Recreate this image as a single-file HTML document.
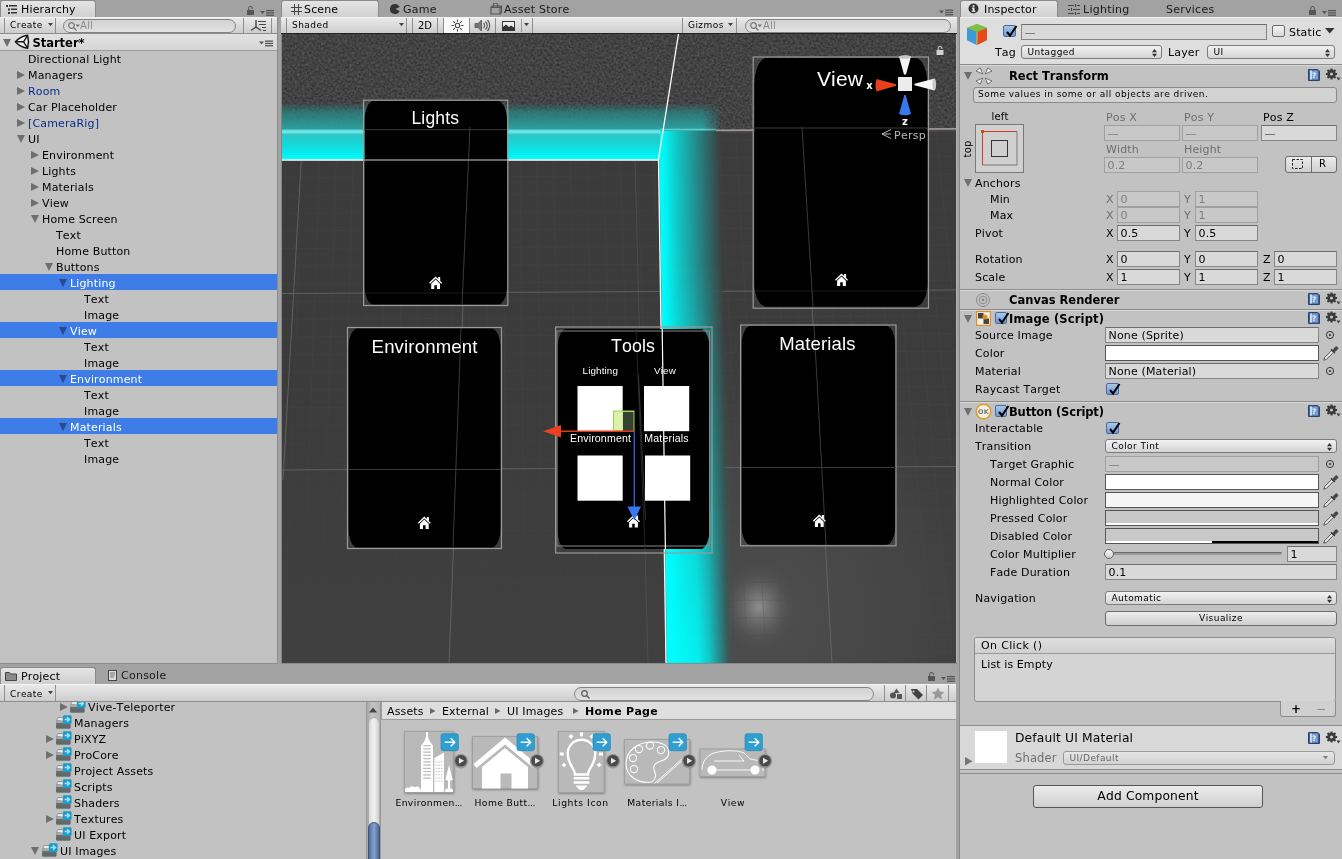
<!DOCTYPE html><html><head><meta charset="utf-8"><title>Unity</title><style>
*{box-sizing:border-box}
html,body{margin:0;padding:0}
body{width:1342px;height:859px;background:#a2a2a2;position:relative;overflow:hidden;
 font-family:"DejaVu Sans","Liberation Sans",sans-serif;font-size:11px;color:#000;letter-spacing:.15px;line-height:16px;font-kerning:none;font-variant-ligatures:none}
#root{position:absolute;left:0;top:0;width:1342px;height:859px;overflow:hidden;will-change:transform}
.a{position:absolute}
.panel{position:absolute;background:#c2c2c2}
.tab{position:absolute;top:0px;height:18px;padding-top:1px;background:linear-gradient(#e4e4e4,#cfcfcf);border:1px solid #8a8a8a;border-bottom:none;border-radius:3px 3px 0 0;font-size:11px;letter-spacing:.15px;line-height:16px;white-space:nowrap}
.itab{position:absolute;top:1px;height:16px;font-size:11px;letter-spacing:.25px;line-height:17px;color:#1a1a1a;white-space:nowrap}
.tb{position:absolute;height:17px;background:linear-gradient(#e9e9e9,#cdcdcd);border-top:1px solid #f4f4f4;border-bottom:1px solid #8c8c8c}
.tbtn{position:absolute;top:0;height:15px;border-left:1px solid #8f8f8f;border-right:1px solid #8f8f8f;font-size:9px;letter-spacing:.45px;line-height:15px;white-space:nowrap;padding-left:5px}
.tb.p .tbtn{height:16px;line-height:18px}
.tb.p .tbtn svg{margin-top:1px}
.tb.p .search{margin-top:1px}
.search{position:absolute;height:14px;border:1px solid #848484;border-radius:7px;background:linear-gradient(#d2d2d2,#e2e2e2);font-size:10px;line-height:12px;color:#8a8a8a;white-space:nowrap}
.row{position:absolute;left:0;height:16px;white-space:nowrap;line-height:16px}
.sel{background:#3e7de7;color:#fff}
.t{position:absolute;white-space:nowrap}
.tri-r{position:absolute;width:0;height:0;border-left:8px solid #6f6f6f;border-top:4.5px solid transparent;border-bottom:4.5px solid transparent}
.tri-d{position:absolute;width:0;height:0;border-top:8px solid #6f6f6f;border-left:4.5px solid transparent;border-right:4.5px solid transparent}
.sel .tri-d{border-top-color:#2a4a8a}
.fld{position:absolute;height:16px;border:1px solid #868686;border-top-color:#6e6e6e;background:#d9d9d9;font-size:11px;line-height:15px;padding-left:2.5px;white-space:nowrap;overflow:hidden}
.fld.dis{border-color:#a0a0a0;background:#c8c8c8;color:#7d7d7d}
.pop{position:absolute;height:14px;border:1px solid #7c7c7c;border-radius:3px;background:linear-gradient(#f2f2f2,#d4d4d4);font-size:9px;letter-spacing:.42px;line-height:12.5px;padding-left:5.5px;white-space:nowrap}
.btn{position:absolute;border:1px solid #6c6c6c;border-radius:3px;background:linear-gradient(#ececec,#cfcfcf);text-align:center;white-space:nowrap}
.hdr{position:absolute;left:960px;width:382px;border-top:1px solid #8e8e8e}
.b{font-weight:bold;letter-spacing:0}
.lbl{position:absolute;white-space:nowrap;line-height:16px}
.gray{color:#6e6e6e}
.cb{position:absolute;width:12.5px;height:12px;border:1px solid #6b6b6b;border-radius:2px;background:linear-gradient(#f4f4f4,#d8d8d8)}
.cb svg{position:absolute;left:0;top:-2px}
</style></head><body><div id="root">
<div class="panel" style="left:0;top:17px;width:278px;height:646.5px;border-right:1px solid #8c8c8c;border-bottom:1px solid #8c8c8c"></div>
<div class="tab" style="left:0;width:96px;padding-left:20px">Hierarchy</div>
<svg class="a" style="left:5px;top:4px" width="13" height="10"><g fill="#333"><rect x="1" y="1" width="2" height="2"/><rect x="4" y="1" width="8" height="1.5"/><rect x="3" y="4.5" width="2" height="2"/><rect x="6" y="4.5" width="6" height="1.5"/><rect x="3" y="8" width="2" height="2"/><rect x="6" y="8" width="6" height="1.5"/></g></svg>
<svg class="a" style="left:247px;top:4.5px" width="30" height="12"><g fill="#555"><rect x="0" y="5" width="7" height="5"/><path d="M1.2 5V3.2a2.3 2.3 0 0 1 4.6 0V4H4.8V3.2a1.3 1.3 0 0 0-2.6 0V5z"/><path d="M13 6h5l-2.5 3z"/><rect x="19" y="5" width="8" height="1.3"/><rect x="19" y="7.3" width="8" height="1.3"/><rect x="19" y="9.6" width="8" height="1.3"/></g></svg>
<div class="tb" style="left:0;top:17px;width:277px">
<div class="tbtn" style="left:4px;width:52px">Create<svg class="a" style="left:43px;top:5px" width="6" height="4"><path d="M0 0h5l-2.5 3.2z" fill="#444"/></svg></div>
<div class="search" style="left:63px;top:0.5px;width:172.5px;padding-left:16px">All<svg class="a" style="left:2.5px;top:1px" width="14" height="11"><circle cx="4.5" cy="4.5" r="2.8" fill="none" stroke="#777" stroke-width="1.2"/><path d="M6.5 6.5l3 3" stroke="#777" stroke-width="1.3"/><path d="M8.5 3.5h4.5l-2.25 2.8z" fill="#777"/></svg></div>
<div class="tbtn" style="left:243px;width:29px;padding:0"><svg class="a" style="left:6px;top:1px" width="18" height="13"><g stroke="#444" fill="none" stroke-width="1.4"><path d="M6 1v7M6 8l-5 3.5M6 8l5 3.5"/><path d="M8 2.5h8M9 5.5h7M12 8.5h4M13 11.5h3" stroke-width="1.1"/></g></svg></div>
</div>
<div class="a" style="left:0;top:34px;width:277px;height:17px;background:linear-gradient(#e2e2e2,#d6d6d6);border-bottom:1px solid #9a9a9a"></div>
<div class="tri-d" style="left:3px;top:39px"></div>
<svg class="a" style="left:14px;top:34px" width="17" height="17" viewBox="14 34 17 17"><path d="M15.3 41.8Q20.5 36.3 27.6 35.3Q29.3 41.8 27.6 48.3Q20.5 47.3 15.3 41.8z" fill="#f2f2f2" stroke="#161616" stroke-width="1.5" stroke-linejoin="round"/><path d="M23.6 41.8H16.5M23.6 41.8L27.2 36M23.6 41.8L27.2 47.6" stroke="#161616" stroke-width="1.4" fill="none"/></svg>
<div class="t b" style="left:32.4px;top:34.5px;font-size:11.5px">Starter*</div>
<svg class="a" style="left:259px;top:40px" width="16" height="8"><g fill="#555"><path d="M0 1.5h5l-2.5 3z"/><rect x="6" y="0.5" width="8" height="1.3"/><rect x="6" y="2.8" width="8" height="1.3"/><rect x="6" y="5.1" width="8" height="1.3"/></g></svg>
<div class="row" style="top:50px;width:277px;">
<span class="t" style="left:28px;top:2px">Directional Light</span></div>
<div class="row" style="top:66px;width:277px;">
<div class="tri-r" style="left:17.4px;top:4.5px"></div>
<span class="t" style="left:28px;top:2px">Managers</span></div>
<div class="row" style="top:82px;width:277px;color:#0c2c8c;">
<div class="tri-r" style="left:17.4px;top:4.5px"></div>
<span class="t" style="left:28px;top:2px">Room</span></div>
<div class="row" style="top:98px;width:277px;">
<div class="tri-r" style="left:17.4px;top:4.5px"></div>
<span class="t" style="left:28px;top:2px">Car Placeholder</span></div>
<div class="row" style="top:114px;width:277px;color:#0c2c8c;">
<div class="tri-r" style="left:17.4px;top:4.5px"></div>
<span class="t" style="left:28px;top:2px">[CameraRig]</span></div>
<div class="row" style="top:130px;width:277px;">
<div class="tri-d" style="left:17px;top:5px"></div>
<span class="t" style="left:28px;top:2px">UI</span></div>
<div class="row" style="top:146px;width:277px;">
<div class="tri-r" style="left:31.4px;top:4.5px"></div>
<span class="t" style="left:42px;top:2px">Environment</span></div>
<div class="row" style="top:162px;width:277px;">
<div class="tri-r" style="left:31.4px;top:4.5px"></div>
<span class="t" style="left:42px;top:2px">Lights</span></div>
<div class="row" style="top:178px;width:277px;">
<div class="tri-r" style="left:31.4px;top:4.5px"></div>
<span class="t" style="left:42px;top:2px">Materials</span></div>
<div class="row" style="top:194px;width:277px;">
<div class="tri-r" style="left:31.4px;top:4.5px"></div>
<span class="t" style="left:42px;top:2px">View</span></div>
<div class="row" style="top:210px;width:277px;">
<div class="tri-d" style="left:31px;top:5px"></div>
<span class="t" style="left:42px;top:2px">Home Screen</span></div>
<div class="row" style="top:226px;width:277px;">
<span class="t" style="left:56px;top:2px">Text</span></div>
<div class="row" style="top:242px;width:277px;">
<span class="t" style="left:56px;top:2px">Home Button</span></div>
<div class="row" style="top:258px;width:277px;">
<div class="tri-d" style="left:45px;top:5px"></div>
<span class="t" style="left:56px;top:2px">Buttons</span></div>
<div class="row sel" style="top:274px;width:277px;">
<div class="tri-d" style="left:59px;top:5px"></div>
<span class="t" style="left:70px;top:2px">Lighting</span></div>
<div class="row" style="top:290px;width:277px;">
<span class="t" style="left:84px;top:2px">Text</span></div>
<div class="row" style="top:306px;width:277px;">
<span class="t" style="left:84px;top:2px">Image</span></div>
<div class="row sel" style="top:322px;width:277px;">
<div class="tri-d" style="left:59px;top:5px"></div>
<span class="t" style="left:70px;top:2px">View</span></div>
<div class="row" style="top:338px;width:277px;">
<span class="t" style="left:84px;top:2px">Text</span></div>
<div class="row" style="top:354px;width:277px;">
<span class="t" style="left:84px;top:2px">Image</span></div>
<div class="row sel" style="top:370px;width:277px;">
<div class="tri-d" style="left:59px;top:5px"></div>
<span class="t" style="left:70px;top:2px">Environment</span></div>
<div class="row" style="top:386px;width:277px;">
<span class="t" style="left:84px;top:2px">Text</span></div>
<div class="row" style="top:402px;width:277px;">
<span class="t" style="left:84px;top:2px">Image</span></div>
<div class="row sel" style="top:418px;width:277px;">
<div class="tri-d" style="left:59px;top:5px"></div>
<span class="t" style="left:70px;top:2px">Materials</span></div>
<div class="row" style="top:434px;width:277px;">
<span class="t" style="left:84px;top:2px">Text</span></div>
<div class="row" style="top:450px;width:277px;">
<span class="t" style="left:84px;top:2px">Image</span></div>
<div class="panel" style="left:281px;top:17px;width:675.5px;height:646.5px;background:#b4b4b4;border-left:1px solid #858585;border-bottom:1px solid #8c8c8c"></div>
<div class="tab" style="left:281px;width:98px;padding-left:22px">Scene</div>
<svg class="a" style="left:290.5px;top:3.5px" width="11" height="11"><g stroke="#444" stroke-width="1"><path d="M3.5 0v11M7.5 0v11M0 3.5h11M0 7.5h11"/></g></svg>
<div class="itab" style="left:403px">Game</div>
<svg class="a" style="left:390px;top:4px" width="11" height="10"><path d="M5 0a5 5 0 1 0 4.6 7L5.5 5 9.6 3A5 5 0 0 0 5 0z" fill="#333"/></svg>
<div class="itab" style="left:504px">Asset Store</div>
<svg class="a" style="left:490px;top:3px" width="12" height="12"><g fill="none" stroke="#555" stroke-width="1.1"><path d="M1 4.5h9v6.5h-9zM3.5 4.5V2a2 2 0 0 1 4 0v2.5"/><path d="M1 4.5l1.5-1.5h9l-1.5 1.5M11.5 3v6.5l-1.5 1.5"/></g></svg>
<svg class="a" style="left:939px;top:9px" width="16" height="8"><g fill="#555"><path d="M0 1.5h5l-2.5 3z"/><rect x="6" y="0.5" width="8" height="1.3"/><rect x="6" y="2.8" width="8" height="1.3"/><rect x="6" y="5.1" width="8" height="1.3"/></g></svg>
<div class="tb" style="left:281px;top:17px;width:675.5px;border-bottom-color:#222">
<div class="tbtn" style="left:5px;width:121px;border-left-color:#8f8f8f">Shaded<svg class="a" style="left:112px;top:5px" width="6" height="4"><path d="M0 0h5l-2.5 3.2z" fill="#444"/></svg></div>
<div class="tbtn" style="left:131px;width:26px;padding-left:5px;font-size:10px;letter-spacing:0">2D</div>
<div class="tbtn" style="left:162px;width:27px;background:#fafafa;padding:0"><svg class="a" style="left:6px;top:0" width="15" height="15"><g stroke="#444" stroke-width="1.1" fill="none"><circle cx="7.5" cy="7.5" r="2.2"/><path d="M7.5 1.5v2.3M7.5 11.2v2.3M1.5 7.5h2.3M11.2 7.5h2.3M3.3 3.3l1.6 1.6M10.1 10.1l1.6 1.6M3.3 11.7l1.6-1.6M10.1 4.9l1.6-1.6"/></g></svg></div>
<div class="tbtn" style="left:188px;width:27px;padding:0;border-left:none"><svg class="a" style="left:5px;top:1px" width="17" height="13"><path d="M1 4.5h3l3.5-3.5v11L4 8.5H1z" fill="#777" stroke="#555" stroke-width=".8"/><g fill="none" stroke="#555" stroke-width="1.1"><path d="M9.5 4a3.5 3.5 0 0 1 0 5M11.5 2.5a5.5 5.5 0 0 1 0 8M13.5 1a8 8 0 0 1 0 11"/></g></svg></div>
<div class="tbtn" style="left:214px;width:38px;padding:0;border-left:none"><svg class="a" style="left:7px;top:3px" width="13" height="10"><rect x=".5" y=".5" width="12" height="9" fill="#eee" stroke="#333"/><path d="M1 9V6l3-2.5 3 2.5 2-1.5 3 2V9z" fill="#333"/></svg><div class="a" style="left:26px;top:1px;width:1px;height:13px;background:#999"></div><svg class="a" style="left:29px;top:5px" width="6" height="4"><path d="M0 0h5l-2.5 3.2z" fill="#444"/></svg></div>
<div class="tbtn" style="left:401px;width:55px;padding-left:5px">Gizmos<svg class="a" style="left:45px;top:5px" width="6" height="4"><path d="M0 0h5l-2.5 3.2z" fill="#444"/></svg></div>
<div class="search" style="left:464px;top:0.5px;width:206px;padding-left:17px">All<svg class="a" style="left:3px;top:1px" width="14" height="11"><circle cx="4.5" cy="4.5" r="2.8" fill="none" stroke="#777" stroke-width="1.2"/><path d="M6.5 6.5l3 3" stroke="#777" stroke-width="1.3"/><path d="M8.5 3.5h4.5l-2.25 2.8z" fill="#777"/></svg></div>
</div>
<svg class="a" style="left:282px;top:34px" width="673.5" height="628.5" viewBox="282 34 673.5 628.5" font-family="'Liberation Sans',sans-serif">
<defs>
<filter id="noise" x="0" y="0" width="100%" height="100%" color-interpolation-filters="sRGB"><feTurbulence type="fractalNoise" baseFrequency="0.42" numOctaves="3" seed="7"/><feColorMatrix type="matrix" values="0.22 0 0 0 0.152  0.22 0 0 0 0.152  0.22 0 0 0 0.152  0 0 0 0 1"/></filter>
<linearGradient id="hg1" gradientUnits="userSpaceOnUse" x1="0" y1="103" x2="0" y2="131"><stop offset="0" stop-color="#2a8888" stop-opacity="0"/><stop offset=".14" stop-color="#2a8686" stop-opacity=".3"/><stop offset=".32" stop-color="#298a8a" stop-opacity=".68"/><stop offset=".6" stop-color="#2a9494" stop-opacity=".85"/><stop offset="1" stop-color="#30a8a8" stop-opacity=".95"/></linearGradient>
<linearGradient id="hg2" gradientUnits="userSpaceOnUse" x1="0" y1="129.5" x2="0" y2="160"><stop offset="0" stop-color="#50d8d8"/><stop offset=".08" stop-color="#78e8e8"/><stop offset=".17" stop-color="#2cc6c6"/><stop offset=".4" stop-color="#1cd2d2"/><stop offset=".72" stop-color="#0ae8e8"/><stop offset="1" stop-color="#00ffff"/></linearGradient>
<linearGradient id="hfade" gradientUnits="userSpaceOnUse" x1="282" y1="0" x2="722" y2="0"><stop offset="0" stop-color="#fff"/><stop offset=".955" stop-color="#fff"/><stop offset=".985" stop-color="#fff" stop-opacity=".35"/><stop offset="1" stop-color="#fff" stop-opacity="0"/></linearGradient>
<mask id="hm" maskUnits="userSpaceOnUse" x="282" y="100" width="445" height="62"><rect x="282" y="100" width="445" height="62" fill="url(#hfade)"/></mask>
<linearGradient id="vg" gradientUnits="userSpaceOnUse" x1="659" y1="0" x2="722" y2="0"><stop offset="0" stop-color="#00ffff"/><stop offset=".1" stop-color="#02f0f0"/><stop offset=".27" stop-color="#10c8c8"/><stop offset=".5" stop-color="#1f9c9c"/><stop offset=".72" stop-color="#2a7070"/><stop offset=".92" stop-color="#384a4a" stop-opacity=".9"/><stop offset="1" stop-color="#3c3c3c" stop-opacity="0"/></linearGradient><radialGradient id="flr" gradientUnits="userSpaceOnUse" cx="765" cy="615" r="300"><stop offset="0" stop-color="#4e4e4e"/><stop offset=".5" stop-color="#474747" stop-opacity=".8"/><stop offset="1" stop-color="#3c3c3c" stop-opacity="0"/></radialGradient>
<linearGradient id="vg2" gradientUnits="userSpaceOnUse" x1="659" y1="0" x2="728" y2="0"><stop offset="0" stop-color="#00ffff"/><stop offset=".45" stop-color="#06eeee"/><stop offset=".62" stop-color="#14c4c4"/><stop offset=".8" stop-color="#2a8080" stop-opacity=".9"/><stop offset="1" stop-color="#444" stop-opacity="0"/></linearGradient>
<linearGradient id="vfade" gradientUnits="userSpaceOnUse" x1="0" y1="260" x2="0" y2="663"><stop offset="0" stop-color="#fff" stop-opacity="0"/><stop offset="1" stop-color="#fff" stop-opacity="1"/></linearGradient>
<mask id="vm" maskUnits="userSpaceOnUse" x="640" y="131" width="120" height="540"><rect x="640" y="131" width="120" height="540" fill="url(#vfade)"/></mask>
<linearGradient id="lfl" gradientUnits="userSpaceOnUse" x1="0" y1="380" x2="0" y2="663"><stop offset="0" stop-color="#484848" stop-opacity="0"/><stop offset="1" stop-color="#484848" stop-opacity=".4"/></linearGradient>
<radialGradient id="spec"><stop offset="0" stop-color="#8e8e8e"/><stop offset=".3" stop-color="#707070" stop-opacity=".85"/><stop offset=".65" stop-color="#555" stop-opacity=".4"/><stop offset="1" stop-color="#464646" stop-opacity="0"/></radialGradient>
<g id="home"><path d="M-6.5 0.3L0 -6 2.6 -3.5V-5.6H4.6V-1.6L6.5 0.3 5.6 1.2 0 -4.1-5.6 1.2zM-4.4 1.2L0-3 4.4 1.2V6.4H1.3V2.8H-1.3V6.4H-4.4z" fill="#fff"/></g>
</defs>
<rect x="282" y="34" width="675" height="629" fill="#3b3b3b"/>
<rect x="282" y="34" width="675" height="127" fill="#4a4a4a" filter="url(#noise)"/>
<path d="M658 160 L663 131 H957 V663 H666z" fill="#3c3c3c"/>
<path d="M658 160 L663 131 H957 V663 H666z" fill="url(#flr)"/>
<ellipse cx="759" cy="607" rx="46" ry="52" fill="url(#spec)"/>
<path d="M282 380H662L666 663H282z" fill="url(#lfl)"/>
<g stroke="#434343" stroke-width="1" opacity=".55">
<path d="M269.6 160L245.8 663"/>
<path d="M286.3 160L264.4 663"/>
<path d="M303.0 160L283.0 663"/>
<path d="M319.7 160L301.6 663"/>
<path d="M336.4 160L320.2 663"/>
<path d="M353.1 160L338.8 663"/>
<path d="M369.8 160L357.4 663"/>
<path d="M386.5 160L376.0 663"/>
<path d="M403.2 160L394.6 663"/>
<path d="M419.9 160L413.2 663"/>
<path d="M436.6 160L431.8 663"/>
<path d="M453.3 160L450.4 663"/>
<path d="M470.0 160L469.0 663"/>
<path d="M486.7 160L487.6 663"/>
<path d="M503.4 160L506.2 663"/>
<path d="M520.1 160L524.8 663"/>
<path d="M536.8 160L543.4 663"/>
<path d="M553.5 160L562.0 663"/>
<path d="M570.2 160L580.6 663"/>
<path d="M586.9 160L599.2 663"/>
<path d="M603.6 160L617.8 663"/>
<path d="M620.3 160L636.4 663"/>
<path d="M637.0 160L655.0 663"/>
<path d="M653.7 160L673.6 663"/>
<path d="M670.4 160L692.2 663"/>
<path d="M687.1 160L710.8 663"/>
<path d="M282 160.0L660 158.0"/>
<path d="M282 177.7L660 175.7"/>
<path d="M282 195.4L660 193.4"/>
<path d="M282 213.1L660 211.1"/>
<path d="M282 230.8L660 228.8"/>
<path d="M282 248.5L660 246.5"/>
<path d="M282 266.2L660 264.2"/>
<path d="M282 283.9L660 281.9"/>
<path d="M282 301.6L660 299.6"/>
<path d="M282 319.3L660 317.3"/>
<path d="M282 337.0L660 335.0"/>
<path d="M282 354.7L660 352.7"/>
<path d="M282 372.4L660 370.4"/>
<path d="M282 390.1L660 388.1"/>
<path d="M282 407.8L660 405.8"/>
<path d="M282 425.5L660 423.5"/>
<path d="M282 443.2L660 441.2"/>
<path d="M282 460.9L660 458.9"/>
<path d="M282 478.6L660 476.6"/>
<path d="M282 496.3L660 494.3"/>
<path d="M282 514.0L660 512.0"/>
<path d="M282 531.7L660 529.7"/>
<path d="M282 549.4L660 547.4"/>
<path d="M282 567.1L660 565.1"/>
<path d="M282 584.8L660 582.8"/>
<path d="M282 602.5L660 600.5"/>
<path d="M282 620.2L660 618.2"/>
<path d="M282 637.9L660 635.9"/>
<path d="M282 655.6L660 653.6"/>
</g>
<g stroke="#4c4c4c" stroke-width="1" opacity=".3">
<path d="M702.1 131L729.4 663"/>
<path d="M718.9 131L748.0 663"/>
<path d="M735.6 131L766.6 663"/>
<path d="M752.2 131L785.2 663"/>
<path d="M768.9 131L803.8 663"/>
<path d="M785.6 131L822.4 663"/>
<path d="M802.4 131L841.0 663"/>
<path d="M819.0 131L859.6 663"/>
<path d="M835.8 131L878.2 663"/>
<path d="M852.5 131L896.8 663"/>
<path d="M869.1 131L915.4 663"/>
<path d="M885.9 131L934.0 663"/>
<path d="M902.5 131L952.6 663"/>
<path d="M919.2 131L971.2 663"/>
<path d="M936.0 131L989.8 663"/>
<path d="M952.6 131L1008.4 663"/>
<path d="M969.4 131L1027.0 663"/>
<path d="M986.0 131L1045.6 663"/>
<path d="M1002.8 131L1064.2 663"/>
<path d="M1019.5 131L1082.8 663"/>
<path d="M1036.1 131L1101.4 663"/>
<path d="M700 140.3L957 138.8"/>
<path d="M700 158.0L957 156.5"/>
<path d="M700 175.7L957 174.2"/>
<path d="M700 193.4L957 191.9"/>
<path d="M700 211.1L957 209.6"/>
<path d="M700 228.8L957 227.3"/>
<path d="M700 246.5L957 245.0"/>
<path d="M700 264.2L957 262.7"/>
<path d="M700 281.9L957 280.4"/>
<path d="M700 299.6L957 298.1"/>
<path d="M700 317.3L957 315.8"/>
<path d="M700 335.0L957 333.5"/>
<path d="M700 352.7L957 351.2"/>
<path d="M700 370.4L957 368.9"/>
<path d="M700 388.1L957 386.6"/>
<path d="M700 405.8L957 404.3"/>
<path d="M700 423.5L957 422.0"/>
<path d="M700 441.2L957 439.7"/>
<path d="M700 458.9L957 457.4"/>
<path d="M700 476.6L957 475.1"/>
<path d="M700 494.3L957 492.8"/>
<path d="M700 512.0L957 510.5"/>
<path d="M700 529.7L957 528.2"/>
<path d="M700 547.4L957 545.9"/>
<path d="M700 565.1L957 563.6"/>
<path d="M700 582.8L957 581.3"/>
<path d="M700 600.5L957 599.0"/>
<path d="M700 618.2L957 616.7"/>
<path d="M700 635.9L957 634.4"/>
<path d="M700 653.6L957 652.1"/>
</g>
<g stroke="#686868" stroke-width="1" fill="none" opacity=".85">
<path d="M303 129L283 480"/><path d="M470 127L449 663"/><path d="M635 160L648 663" opacity=".45"/><path d="M802 127L832 663"/>
<path d="M282 293.5L957 290"/><path d="M282 470L957 466.5"/>
</g>
<g transform="translate(0 131) skewX(0.9) translate(0 -131)"><rect x="658.6" y="131" width="66" height="532" fill="url(#vg)"/><g mask="url(#vm)"><rect x="658.6" y="131" width="72" height="532" fill="url(#vg2)"/></g></g>
<g mask="url(#hm)"><rect x="282" y="103" width="445" height="28" fill="url(#hg1)"/></g>
<rect x="282" y="129.5" width="378" height="30.5" fill="url(#hg2)"/>
<path d="M660 129.5h56" stroke="#8ff" stroke-width="1.6" opacity=".5"/>
<path d="M716 130.3L957 128.8" stroke="#a49a9a" stroke-width="1.8"/>
<path d="M722 132L957 130.5" stroke="#555" stroke-width="2" opacity=".5"/>
<path d="M282 160H658" stroke="#fff" stroke-width="1.6"/>
<path d="M678.5 34L658.5 159L666 663" stroke="#fff" stroke-width="1.3" fill="none"/>
<path d="M364.5 121A9 20 0 0 1 373.5 101H498A9 20 0 0 1 507 121V285.5A9 19 0 0 1 498 304.5H373.5A9 19 0 0 1 364.5 285.5z" fill="#000"/>
<rect x="363.6" y="100.2" width="144.2" height="205.3" fill="none" stroke="#9a9a9a" stroke-width="1.2"/>
<path d="M754.3 85A12 27 0 0 1 766.3 58H915.5A12 27 0 0 1 927.5 85V282.7A12 24 0 0 1 915.5 306.7H766.3A12 24 0 0 1 754.3 282.7z" fill="#000"/>
<rect x="753.2" y="57" width="175.29999999999995" height="251.2" fill="none" stroke="#9a9a9a" stroke-width="1.2"/>
<path d="M348.5 348.5A9 20 0 0 1 357.5 328.5H491.5A9 20 0 0 1 500.5 348.5V528.5A9 19 0 0 1 491.5 547.5H357.5A9 19 0 0 1 348.5 528.5z" fill="#000"/>
<rect x="347.5" y="327.5" width="154.0" height="221.0" fill="none" stroke="#9a9a9a" stroke-width="1.2"/>
<path d="M557.5 349A9 20 0 0 1 566.5 329H700.5A9 20 0 0 1 709.5 349V530A9 19 0 0 1 700.5 549H566.5A9 19 0 0 1 557.5 530z" fill="#000"/>
<rect x="555.6" y="327" width="156.39999999999998" height="226" fill="none" stroke="#9a9a9a" stroke-width="1.2"/>
<rect x="557" y="331" width="152.5" height="215" fill="none" stroke="#888" stroke-width="1"/>
<path d="M741.6 346A9 20 0 0 1 750.6 326H886.3A9 20 0 0 1 895.3 346V525.8A9 19 0 0 1 886.3 544.8H750.6A9 19 0 0 1 741.6 525.8z" fill="#000"/>
<rect x="740.6" y="325" width="155.39999999999998" height="220.79999999999995" fill="none" stroke="#9a9a9a" stroke-width="1.2"/>
<g stroke="#3a3a3a" stroke-width="1" fill="none">
<path d="M470 127L462 305"/><path d="M461 328L453 548"/><path d="M802 127L813 307"/><path d="M814 326L826 545"/><path d="M636 329L645 549" opacity=".6"/>
<path d="M364 129.7H507"/><path d="M753 128H928"/><path d="M348 469.5H501"/><path d="M742 467.5H896"/><path d="M364 293H507" opacity=".5"/><path d="M753 291H928" opacity=".5"/>
</g>
<path d="M364 160H507" stroke="#8a8a8a" stroke-width="1.6"/>
<path d="M662.2 329L665.4 549" stroke="#fff" stroke-width="1.2"/>
<g fill="#fff" text-anchor="middle">
<text x="435.3" y="124.3" font-size="17.5">Lights</text>
<text x="840" y="86" font-size="21">View</text>
<text x="424.6" y="353" font-size="18.6">Environment</text>
<text x="633" y="351.7" font-size="17.8">Tools</text>
<text x="817.5" y="350.3" font-size="18.5">Materials</text>
<text x="600.3" y="373.5" font-size="9.8">Lighting</text>
<text x="665" y="373.5" font-size="9.8">View</text>
<text x="600.5" y="442" font-size="10.6">Environment</text>
<text x="666.5" y="442" font-size="10.6">Materials</text>
</g>
<rect x="577.5" y="386" width="45.2" height="45.2" fill="#fff"/>
<rect x="644" y="386" width="45.2" height="45.2" fill="#fff"/>
<rect x="577.5" y="455.5" width="45.2" height="45.2" fill="#fff"/>
<rect x="645" y="455.5" width="45.2" height="45.2" fill="#fff"/>
<use href="#home" x="435.6" y="282.5"/>
<use href="#home" x="841.5" y="279.5"/>
<use href="#home" x="424.3" y="522.5"/>
<use href="#home" x="633.5" y="521"/>
<use href="#home" x="819.3" y="520.5"/>
<path d="M638.5 375L645.5 520" stroke="#555" stroke-width="1" opacity=".6"/>
<rect x="613.5" y="411" width="20.5" height="20" fill="#d7efa0" fill-opacity=".85" stroke="#9bd24a" stroke-width="1"/>
<rect x="623" y="412" width="10.5" height="19" fill="#1e2a22" fill-opacity=".85"/>
<path d="M634 431.3H558" stroke="#e0381c" stroke-width="1.4"/><path d="M543 431.3L561 425V437.6z" fill="#ea4020"/>
<path d="M634.3 431V508" stroke="#2b5fd8" stroke-width="1.4"/><path d="M634.3 520.5L627.5 506.5H641z" fill="#3878ee"/>
<rect x="898" y="77" width="14" height="14" fill="#ececec"/>
<path d="M899 56.5Q905 54.5 911 56.5L906 74.5H904z" fill="#f4f4f4"/><ellipse cx="905" cy="57" rx="6" ry="1.8" fill="#c8c8c8"/>
<path d="M934.5 78.5Q936.5 84.5 934.5 90.5L914.5 85.3V83.7z" fill="#f4f4f4"/><ellipse cx="934.3" cy="84.5" rx="1.8" ry="6" fill="#c8c8c8"/>
<path d="M876.5 79Q874.5 85 876.5 91.5L896 85.8V84.2z" fill="#e8401c"/>
<path d="M899 114Q905 116.5 911 114L905.7 95H904.3z" fill="#3878ee"/>
<text x="869.5" y="88.5" font-size="10" font-weight="bold" fill="#fff" text-anchor="middle" font-family="'DejaVu Sans',sans-serif">x</text>
<text x="905" y="124.5" font-size="10" font-weight="bold" fill="#fff" text-anchor="middle" font-family="'DejaVu Sans',sans-serif">z</text>
<text x="894" y="139" font-size="11" fill="#b8b8b8" font-family="'DejaVu Sans',sans-serif" letter-spacing=".3">Persp</text>
<path d="M891 129.5L882 134L891 138.5M882 134H891" stroke="#b8b8b8" stroke-width="1" fill="none"/>
<g fill="#d0d0d0"><rect x="936.5" y="50" width="7" height="5"/><path d="M937.7 50V48.3a2.3 2.3 0 0 1 4.6 0V49H941.3V48.3a1.3 1.3 0 0 0-2.6 0V50z"/></g>
</svg>
<div class="panel" style="left:0;top:684px;width:956px;height:175px"></div>
<div class="tab" style="left:0;top:667px;width:96px;height:17px;padding-left:20px">Project</div>
<svg class="a" style="left:5px;top:671px" width="12" height="10"><path d="M.5 9.5v-8h4l1 1.5h6v6.5z" fill="#8a8a8a" stroke="#444"/></svg>
<div class="itab" style="left:121px;top:667px">Console</div>
<svg class="a" style="left:108px;top:670px" width="10" height="11"><rect x=".5" y=".5" width="8" height="10" fill="#ddd" stroke="#444"/><path d="M2 3h5M2 5h5M2 7h4" stroke="#555" stroke-width=".8"/></svg>
<svg class="a" style="left:928px;top:670.5px" width="30" height="12"><g fill="#555"><rect x="0" y="5" width="7" height="5"/><path d="M1.2 5V3.2a2.3 2.3 0 0 1 4.6 0V4H4.8V3.2a1.3 1.3 0 0 0-2.6 0V5z"/><path d="M13 6h5l-2.5 3z"/><rect x="19" y="5" width="8" height="1.3"/><rect x="19" y="7.3" width="8" height="1.3"/><rect x="19" y="9.6" width="8" height="1.3"/></g></svg>
<div class="tb p" style="left:0;top:684px;width:956px;height:18px">
<div class="tbtn" style="left:4px;width:52px">Create<svg class="a" style="left:43px;top:5px" width="6" height="4"><path d="M0 0h5l-2.5 3.2z" fill="#444"/></svg></div>
<div class="search" style="left:574px;top:0.5px;width:300px"><svg class="a" style="left:5px;top:1px" width="11" height="11"><circle cx="4.5" cy="4.5" r="2.8" fill="none" stroke="#555" stroke-width="1.2"/><path d="M6.5 6.5l3 3" stroke="#555" stroke-width="1.3"/></svg></div>
<div class="tbtn" style="left:884px;width:22px;padding:0"><svg class="a" style="left:4px;top:2px" width="14" height="12"><circle cx="4" cy="7.5" r="3" fill="#555"/><rect x="8" y="6" width="5" height="5" fill="#555"/><path d="M4.5 5l3-4.5 3 4.5z" fill="#555"/></svg></div>
<div class="tbtn" style="left:905px;width:22px;padding:0"><svg class="a" style="left:4px;top:2px" width="14" height="12"><path d="M1 1h6l6 6-4.5 4.5-6-6z" fill="#444"/><circle cx="3.5" cy="3.5" r="1" fill="#ddd"/></svg></div>
<div class="tbtn" style="left:926px;width:23px;padding:0"><svg class="a" style="left:4px;top:1px" width="14" height="13"><path d="M7 .5l1.9 4.1 4.5.5-3.3 3 .9 4.4L7 10.3 3 12.5l.9-4.4-3.3-3 4.5-.5z" fill="#999"/></svg></div>
</div>
<div class="a" style="left:0;top:702px;width:366px;height:157px;overflow:hidden">
<div class="row" style="top:-3px;width:366px">
<div class="tri-r" style="left:60px;top:3.5px"></div>
<svg class="a" style="left:69px;top:-1px" width="17" height="16" viewBox="0 0 17 16"><path d="M1.6 6.5L3 3.6h5.2V7z" fill="#ececec" stroke="#7a7a7a" stroke-width=".7"/><path d="M1.2 7.2h14.2v6.6a.8.8 0 0 1-.8.8H2a.8.8 0 0 1-.8-.8z" fill="#6c7071"/><path d="M1.6 8h7" stroke="#dfe6ea" stroke-width=".9"/><path d="M1.2 10.5h14.2v3.3a.8.8 0 0 1-.8.8H2a.8.8 0 0 1-.8-.8z" fill="#5f6a6c"/><rect x="8" y="1.2" width="8.6" height="8.8" rx="1.3" fill="#1c9cc8"/><path d="M9.6 5.6h4.4M12 3.4l2.4 2.2L12 7.8" stroke="#9fe0f4" stroke-width="1.5" fill="none"/></svg>
<span class="t" style="left:88px;top:1px">Vive-Teleporter</span></div>
<div class="row" style="top:13px;width:366px">
<svg class="a" style="left:55px;top:-1px" width="17" height="16" viewBox="0 0 17 16"><path d="M1.6 6.5L3 3.6h5.2V7z" fill="#ececec" stroke="#7a7a7a" stroke-width=".7"/><path d="M1.2 7.2h14.2v6.6a.8.8 0 0 1-.8.8H2a.8.8 0 0 1-.8-.8z" fill="#6c7071"/><path d="M1.6 8h7" stroke="#dfe6ea" stroke-width=".9"/><path d="M1.2 10.5h14.2v3.3a.8.8 0 0 1-.8.8H2a.8.8 0 0 1-.8-.8z" fill="#5f6a6c"/><rect x="8" y="1.2" width="8.6" height="8.8" rx="1.3" fill="#1c9cc8"/><path d="M9.6 5.6h4.4M12 3.4l2.4 2.2L12 7.8" stroke="#9fe0f4" stroke-width="1.5" fill="none"/></svg>
<span class="t" style="left:74px;top:1px">Managers</span></div>
<div class="row" style="top:29px;width:366px">
<div class="tri-r" style="left:46px;top:3.5px"></div>
<svg class="a" style="left:55px;top:-1px" width="17" height="16" viewBox="0 0 17 16"><path d="M1.6 6.5L3 3.6h5.2V7z" fill="#ececec" stroke="#7a7a7a" stroke-width=".7"/><path d="M1.2 7.2h14.2v6.6a.8.8 0 0 1-.8.8H2a.8.8 0 0 1-.8-.8z" fill="#6c7071"/><path d="M1.6 8h7" stroke="#dfe6ea" stroke-width=".9"/><path d="M1.2 10.5h14.2v3.3a.8.8 0 0 1-.8.8H2a.8.8 0 0 1-.8-.8z" fill="#5f6a6c"/><rect x="8" y="1.2" width="8.6" height="8.8" rx="1.3" fill="#1c9cc8"/><path d="M9.6 5.6h4.4M12 3.4l2.4 2.2L12 7.8" stroke="#9fe0f4" stroke-width="1.5" fill="none"/></svg>
<span class="t" style="left:74px;top:1px">PiXYZ</span></div>
<div class="row" style="top:45px;width:366px">
<div class="tri-r" style="left:46px;top:3.5px"></div>
<svg class="a" style="left:55px;top:-1px" width="17" height="16" viewBox="0 0 17 16"><path d="M1.6 6.5L3 3.6h5.2V7z" fill="#ececec" stroke="#7a7a7a" stroke-width=".7"/><path d="M1.2 7.2h14.2v6.6a.8.8 0 0 1-.8.8H2a.8.8 0 0 1-.8-.8z" fill="#6c7071"/><path d="M1.6 8h7" stroke="#dfe6ea" stroke-width=".9"/><path d="M1.2 10.5h14.2v3.3a.8.8 0 0 1-.8.8H2a.8.8 0 0 1-.8-.8z" fill="#5f6a6c"/><rect x="8" y="1.2" width="8.6" height="8.8" rx="1.3" fill="#1c9cc8"/><path d="M9.6 5.6h4.4M12 3.4l2.4 2.2L12 7.8" stroke="#9fe0f4" stroke-width="1.5" fill="none"/></svg>
<span class="t" style="left:74px;top:1px">ProCore</span></div>
<div class="row" style="top:61px;width:366px">
<svg class="a" style="left:55px;top:-1px" width="17" height="16" viewBox="0 0 17 16"><path d="M1.6 6.5L3 3.6h5.2V7z" fill="#ececec" stroke="#7a7a7a" stroke-width=".7"/><path d="M1.2 7.2h14.2v6.6a.8.8 0 0 1-.8.8H2a.8.8 0 0 1-.8-.8z" fill="#6c7071"/><path d="M1.6 8h7" stroke="#dfe6ea" stroke-width=".9"/><path d="M1.2 10.5h14.2v3.3a.8.8 0 0 1-.8.8H2a.8.8 0 0 1-.8-.8z" fill="#5f6a6c"/><rect x="8" y="1.2" width="8.6" height="8.8" rx="1.3" fill="#1c9cc8"/><path d="M9.6 5.6h4.4M12 3.4l2.4 2.2L12 7.8" stroke="#9fe0f4" stroke-width="1.5" fill="none"/></svg>
<span class="t" style="left:74px;top:1px">Project Assets</span></div>
<div class="row" style="top:77px;width:366px">
<svg class="a" style="left:55px;top:-1px" width="17" height="16" viewBox="0 0 17 16"><path d="M1.6 6.5L3 3.6h5.2V7z" fill="#ececec" stroke="#7a7a7a" stroke-width=".7"/><path d="M1.2 7.2h14.2v6.6a.8.8 0 0 1-.8.8H2a.8.8 0 0 1-.8-.8z" fill="#6c7071"/><path d="M1.6 8h7" stroke="#dfe6ea" stroke-width=".9"/><path d="M1.2 10.5h14.2v3.3a.8.8 0 0 1-.8.8H2a.8.8 0 0 1-.8-.8z" fill="#5f6a6c"/><rect x="8" y="1.2" width="8.6" height="8.8" rx="1.3" fill="#1c9cc8"/><path d="M9.6 5.6h4.4M12 3.4l2.4 2.2L12 7.8" stroke="#9fe0f4" stroke-width="1.5" fill="none"/></svg>
<span class="t" style="left:74px;top:1px">Scripts</span></div>
<div class="row" style="top:93px;width:366px">
<svg class="a" style="left:55px;top:-1px" width="17" height="16" viewBox="0 0 17 16"><path d="M1.6 6.5L3 3.6h5.2V7z" fill="#ececec" stroke="#7a7a7a" stroke-width=".7"/><path d="M1.2 7.2h14.2v6.6a.8.8 0 0 1-.8.8H2a.8.8 0 0 1-.8-.8z" fill="#6c7071"/><path d="M1.6 8h7" stroke="#dfe6ea" stroke-width=".9"/><path d="M1.2 10.5h14.2v3.3a.8.8 0 0 1-.8.8H2a.8.8 0 0 1-.8-.8z" fill="#5f6a6c"/><rect x="8" y="1.2" width="8.6" height="8.8" rx="1.3" fill="#1c9cc8"/><path d="M9.6 5.6h4.4M12 3.4l2.4 2.2L12 7.8" stroke="#9fe0f4" stroke-width="1.5" fill="none"/></svg>
<span class="t" style="left:74px;top:1px">Shaders</span></div>
<div class="row" style="top:109px;width:366px">
<div class="tri-r" style="left:46px;top:3.5px"></div>
<svg class="a" style="left:55px;top:-1px" width="17" height="16" viewBox="0 0 17 16"><path d="M1.6 6.5L3 3.6h5.2V7z" fill="#ececec" stroke="#7a7a7a" stroke-width=".7"/><path d="M1.2 7.2h14.2v6.6a.8.8 0 0 1-.8.8H2a.8.8 0 0 1-.8-.8z" fill="#6c7071"/><path d="M1.6 8h7" stroke="#dfe6ea" stroke-width=".9"/><path d="M1.2 10.5h14.2v3.3a.8.8 0 0 1-.8.8H2a.8.8 0 0 1-.8-.8z" fill="#5f6a6c"/><rect x="8" y="1.2" width="8.6" height="8.8" rx="1.3" fill="#1c9cc8"/><path d="M9.6 5.6h4.4M12 3.4l2.4 2.2L12 7.8" stroke="#9fe0f4" stroke-width="1.5" fill="none"/></svg>
<span class="t" style="left:74px;top:1px">Textures</span></div>
<div class="row" style="top:125px;width:366px">
<svg class="a" style="left:55px;top:-1px" width="17" height="16" viewBox="0 0 17 16"><path d="M1.6 6.5L3 3.6h5.2V7z" fill="#ececec" stroke="#7a7a7a" stroke-width=".7"/><path d="M1.2 7.2h14.2v6.6a.8.8 0 0 1-.8.8H2a.8.8 0 0 1-.8-.8z" fill="#6c7071"/><path d="M1.6 8h7" stroke="#dfe6ea" stroke-width=".9"/><path d="M1.2 10.5h14.2v3.3a.8.8 0 0 1-.8.8H2a.8.8 0 0 1-.8-.8z" fill="#5f6a6c"/><rect x="8" y="1.2" width="8.6" height="8.8" rx="1.3" fill="#1c9cc8"/><path d="M9.6 5.6h4.4M12 3.4l2.4 2.2L12 7.8" stroke="#9fe0f4" stroke-width="1.5" fill="none"/></svg>
<span class="t" style="left:74px;top:1px">UI Export</span></div>
<div class="row" style="top:141px;width:366px">
<div class="tri-d" style="left:31px;top:4px"></div>
<svg class="a" style="left:41px;top:-1px" width="17" height="16" viewBox="0 0 17 16"><path d="M1.6 6.5L3 3.6h5.2V7z" fill="#ececec" stroke="#7a7a7a" stroke-width=".7"/><path d="M1.2 7.2h14.2v6.6a.8.8 0 0 1-.8.8H2a.8.8 0 0 1-.8-.8z" fill="#6c7071"/><path d="M1.6 8h7" stroke="#dfe6ea" stroke-width=".9"/><path d="M1.2 10.5h14.2v3.3a.8.8 0 0 1-.8.8H2a.8.8 0 0 1-.8-.8z" fill="#5f6a6c"/><rect x="8" y="1.2" width="8.6" height="8.8" rx="1.3" fill="#1c9cc8"/><path d="M9.6 5.6h4.4M12 3.4l2.4 2.2L12 7.8" stroke="#9fe0f4" stroke-width="1.5" fill="none"/></svg>
<span class="t" style="left:60px;top:1px">UI Images</span></div>
</div>
<div class="a" style="left:366px;top:702px;width:15px;height:157px;background:linear-gradient(90deg,#a8a8a8,#c4c4c4 40%,#b4b4b4);border-left:1px solid #999;border-right:1px solid #999"></div>
<svg class="a" style="left:369px;top:707px" width="9" height="6"><path d="M0 5.5h8L4 .5z" fill="#444"/></svg>
<div class="a" style="left:367.5px;top:717px;width:12px;height:150px;border-radius:6px;background:linear-gradient(90deg,#d8d8d8,#f2f2f2 50%,#cfcfcf);border:1px solid #aaa"></div>
<div class="a" style="left:367.5px;top:822px;width:12px;height:60px;border-radius:6px;background:linear-gradient(90deg,#4f6d9c,#86a3cf 50%,#4a6794);border:1px solid #3c557c"></div>
<div class="a" style="left:381px;top:702px;width:575px;height:18px;background:#dedede;border-bottom:1px solid #9b9b9b;border-left:1px solid #9b9b9b"></div>
<div class="t" style="left:387px;top:704px;">Assets</div>
<div class="t" style="left:442px;top:704px;">External</div>
<div class="t" style="left:507px;top:704px;">UI Images</div>
<div class="t b" style="left:585px;top:704px;letter-spacing:.3px">Home Page</div>
<svg class="a" style="left:430px;top:708px" width="6" height="7"><path d="M0 0l5.5 3L0 6z" fill="#6a6a6a"/></svg>
<svg class="a" style="left:495px;top:708px" width="6" height="7"><path d="M0 0l5.5 3L0 6z" fill="#6a6a6a"/></svg>
<svg class="a" style="left:573px;top:708px" width="6" height="7"><path d="M0 0l5.5 3L0 6z" fill="#6a6a6a"/></svg>
<svg class="a" style="left:382px;top:721px" width="575" height="138" viewBox="382 721 575 138">
<defs><filter id="sh" x="-10%" y="-10%" width="125%" height="125%"><feDropShadow dx="0.5" dy="1" stdDeviation="0.8" flood-color="#000" flood-opacity=".35"/></filter></defs>
<rect x="404.3" y="731.3" width="48.89999999999998" height="61.10000000000002" fill="#b9b9b9" stroke="#9a9a9a" stroke-width=".8" filter="url(#sh)"/>
<g fill="#fff">
<path d="M421 792V745.5L424.3 741.5 425.6 737.8H426V732H428V737.8H428.4L429.7 741.5 433 745.5V792z"/>
<path d="M434.3 792V758L444 752.6V792z"/>
<path d="M449 765L452.8 780.2H450.1V790H448V780.2H445.3z"/>
<path d="M405 792v-2.2a2.6 2.6 0 0 1 4.2-1.8 3.2 3.2 0 0 1 5.6-.4 3 3 0 0 1 5.2 1.2 2 2 0 0 1 1 1.6V792z"/><path d="M445 792v-1.5a2.3 2.3 0 0 1 4-1.3 2.3 2.3 0 0 1 4 1.3V792z"/>
</g>
<g stroke="#bdbdbd" stroke-width="1.3">
<path d="M423.3 745.6h7.6"/>
<path d="M423.3 748.9h7.6"/>
<path d="M423.3 752.1h7.6"/>
<path d="M423.3 755.4h7.6"/>
<path d="M423.3 758.6h7.6"/>
<path d="M423.3 761.9h7.6"/>
<path d="M423.3 765.1h7.6"/>
<path d="M423.3 768.4h7.6"/>
<path d="M423.3 771.6h7.6"/>
<path d="M423.3 774.9h7.6"/>
<path d="M423.3 778.1h7.6"/>
</g><g stroke="#c4c4c4" stroke-width="1" stroke-dasharray="1.6 1">
<path d="M435.6 762.0h7.4"/>
<path d="M435.6 765.2h7.4"/>
<path d="M435.6 768.4h7.4"/>
<path d="M435.6 771.6h7.4"/>
<path d="M435.6 774.8h7.4"/>
<path d="M435.6 778.0h7.4"/>
<path d="M435.6 781.2h7.4"/>
</g>
<rect x="441.0" y="733.6999999999999" width="17.4" height="17" rx="2.2" fill="#2f9fd2" stroke="#1f80b0" stroke-width=".6"/><path d="M444.7 742.1999999999999h10M450.7 738.1999999999999l4 4-4 4" stroke="#fff" stroke-width="1.5" fill="none"/>
<circle cx="460.9" cy="761.4" r="7.2" fill="#8c8c8c" opacity=".7"/><circle cx="460.9" cy="760.8" r="6.3" fill="#4a4a4a" stroke="#9a9a9a" stroke-width="1"/><path d="M458.9 757.8l5.2 3-5.2 3z" fill="#e8e8e8"/>
<rect x="472.6" y="736.4" width="64.89999999999998" height="52.200000000000045" fill="#b9b9b9" stroke="#9a9a9a" stroke-width=".8" filter="url(#sh)"/>
<path d="M473.5 764L505 737.5 536.5 764l-3 4L505 744.5 476.5 768z" fill="#fff"/><path d="M482 767L505 748l23 19v21.5H511.5V773.5h-11V788.5H482z" fill="#fff"/>
<rect x="517.0" y="733.6999999999999" width="17.4" height="17" rx="2.2" fill="#2f9fd2" stroke="#1f80b0" stroke-width=".6"/><path d="M520.7 742.1999999999999h10M526.7 738.1999999999999l4 4-4 4" stroke="#fff" stroke-width="1.5" fill="none"/>
<circle cx="537" cy="761.4" r="7.2" fill="#8c8c8c" opacity=".7"/><circle cx="537" cy="760.8" r="6.3" fill="#4a4a4a" stroke="#9a9a9a" stroke-width="1"/><path d="M535 757.8l5.2 3-5.2 3z" fill="#e8e8e8"/>
<rect x="558.4" y="731.3" width="45.60000000000002" height="61.10000000000002" fill="#b9b9b9" stroke="#9a9a9a" stroke-width=".8" filter="url(#sh)"/>
<g fill="none" stroke="#fff" stroke-width="2.4"><path d="M575 774.5c0-6-7.3-10-7.3-21a13.8 13.8 0 0 1 27.6 0c0 11-7.3 15-7.3 21z"/></g>
<g fill="#fff"><rect x="573.5" y="777" width="16" height="2.6" rx="1"/><rect x="573.5" y="781.2" width="16" height="2.6" rx="1"/><path d="M575.5 785.5h12l-4 4.5h-4z"/>
<rect x="580" y="732.3" width="3" height="4"/><rect x="559.8" y="752.5" width="4" height="3"/><rect x="599" y="752.5" width="4" height="3"/><rect x="569.3" y="734.8" width="3.4" height="3.4" transform="rotate(40 571 736.5)"/><rect x="590.3" y="734.8" width="3.4" height="3.4" transform="rotate(-40 592 736.5)"/><rect x="562.3" y="763.3" width="3.4" height="3.4" transform="rotate(30 564 765)"/><rect x="597.3" y="763.3" width="3.4" height="3.4" transform="rotate(-30 599 765)"/></g>
<rect x="593.0" y="733.6999999999999" width="17.4" height="17" rx="2.2" fill="#2f9fd2" stroke="#1f80b0" stroke-width=".6"/><path d="M596.7 742.1999999999999h10M602.7 738.1999999999999l4 4-4 4" stroke="#fff" stroke-width="1.5" fill="none"/>
<circle cx="613" cy="761.4" r="7.2" fill="#8c8c8c" opacity=".7"/><circle cx="613" cy="760.8" r="6.3" fill="#4a4a4a" stroke="#9a9a9a" stroke-width="1"/><path d="M611 757.8l5.2 3-5.2 3z" fill="#e8e8e8"/>
<rect x="624.6" y="739.4" width="65.0" height="44.60000000000002" fill="#b9b9b9" stroke="#9a9a9a" stroke-width=".8" filter="url(#sh)"/>
<g fill="none" stroke="#fff" stroke-width="1.05"><path d="M652 782c-14 2-26-6-26-18s10-22 26-22 18 8 16 14-12 4-14 10 6 8-2 16z"/><circle cx="633" cy="758" r="3.6"/><circle cx="639" cy="749" r="3.6"/><circle cx="650" cy="745.5" r="3.6"/><circle cx="661" cy="750" r="3.6"/><circle cx="634" cy="769" r="3.6"/><path d="M654.5 783.5L688 753.5M657 783L688 755.5" stroke-width=".9"/></g>
<rect x="669.0" y="733.6999999999999" width="17.4" height="17" rx="2.2" fill="#2f9fd2" stroke="#1f80b0" stroke-width=".6"/><path d="M672.7 742.1999999999999h10M678.7 738.1999999999999l4 4-4 4" stroke="#fff" stroke-width="1.5" fill="none"/>
<circle cx="689" cy="761.4" r="7.2" fill="#8c8c8c" opacity=".7"/><circle cx="689" cy="760.8" r="6.3" fill="#4a4a4a" stroke="#9a9a9a" stroke-width="1"/><path d="M687 757.8l5.2 3-5.2 3z" fill="#e8e8e8"/>
<rect x="700" y="749" width="65" height="27.600000000000023" fill="#b9b9b9" stroke="#9a9a9a" stroke-width=".8" filter="url(#sh)"/>
<g fill="none" stroke="#fff" stroke-width="1"><path d="M702 770c0-8 4-14 12-17 10-3 24-3 30 0l6 6c8 1 13 3 13 8v4" stroke-width=".9"/><path d="M714 761h30l-5-6M716 770h36" stroke-width=".9"/></g><circle cx="712" cy="770" r="4.6" fill="#fff"/><circle cx="755" cy="770" r="4.6" fill="#fff"/>
<rect x="745.0" y="733.6999999999999" width="17.4" height="17" rx="2.2" fill="#2f9fd2" stroke="#1f80b0" stroke-width=".6"/><path d="M748.7 742.1999999999999h10M754.7 738.1999999999999l4 4-4 4" stroke="#fff" stroke-width="1.5" fill="none"/>
<circle cx="765" cy="761.4" r="7.2" fill="#8c8c8c" opacity=".7"/><circle cx="765" cy="760.8" r="6.3" fill="#4a4a4a" stroke="#9a9a9a" stroke-width="1"/><path d="M763 757.8l5.2 3-5.2 3z" fill="#e8e8e8"/>
</svg>
<div class="lbl" style="left:383.7px;top:795px;width:90px;text-align:center;font-size:9.2px;letter-spacing:.4px">Environmen<span style="letter-spacing:-.5px">...</span></div>
<div class="lbl" style="left:459.7px;top:795px;width:90px;text-align:center;font-size:9.2px;letter-spacing:.4px">Home Butt<span style="letter-spacing:-.5px">...</span></div>
<div class="lbl" style="left:535.5px;top:795px;width:90px;text-align:center;font-size:9.2px;letter-spacing:.6px">Lights Icon</div>
<div class="lbl" style="left:612px;top:795px;width:90px;text-align:center;font-size:9.2px;letter-spacing:.4px">Materials I<span style="letter-spacing:-.5px">...</span></div>
<div class="lbl" style="left:688px;top:795px;width:90px;text-align:center;font-size:9.2px;letter-spacing:.6px">View</div>
<div class="panel" style="left:959px;top:17px;width:383px;height:842px;border-left:1px solid #8a8a8a"></div>
<div class="tab" style="left:960px;width:98px;padding-left:23px">Inspector</div>
<svg class="a" style="left:968px;top:3px" width="11" height="11"><circle cx="5.5" cy="5.5" r="5" fill="#333"/><rect x="4.6" y="4.6" width="1.9" height="4" fill="#eee"/><rect x="4.6" y="2.2" width="1.9" height="1.6" fill="#eee"/><rect x="3.8" y="4.6" width="1.5" height="1" fill="#eee"/><rect x="3.8" y="7.8" width="3.6" height="1" fill="#eee"/></svg>
<div class="itab" style="left:1083px">Lighting</div>
<svg class="a" style="left:1068px;top:4px" width="12" height="11"><g stroke="#444" stroke-width="1.1" fill="none"><path d="M0 1.5h6M9 1.5h3M0 5.5h2M5 5.5h7M0 9.5h6M9 9.5h3M7.5 0v3M3.5 4v3M7.5 8v3"/></g></svg>
<div class="itab" style="left:1166px">Services</div>
<svg class="a" style="left:1309px;top:4.5px" width="34" height="12"><g fill="#555"><rect x="0" y="5" width="7" height="5"/><path d="M1.2 5V3.2a2.3 2.3 0 0 1 4.6 0V5H4.8V3.2a1.3 1.3 0 0 0-2.6 0V5z"/><path d="M13 6h5l-2.5 3z"/><rect x="19" y="5" width="8" height="1.3"/><rect x="19" y="7.3" width="8" height="1.3"/><rect x="19" y="9.6" width="8" height="1.3"/></g></svg>
<div class="a" style="left:960px;top:17px;width:382px;height:48px;background:#dedede;border-top:1px solid #f0f0f0"></div>
<svg class="a" style="left:965px;top:23px" width="24" height="23" viewBox="0 0 24 23"><path d="M12 1L22 5V17L12 22 2 17V5z" fill="#888"/><path d="M2 5l10 4v13L2 17z" fill="#3a9bd6"/><path d="M22 5L12 9v13l10-5z" fill="#e8481c"/><path d="M2 5l10-4 10 4-10 4z" fill="#7fc043"/><path d="M12 9v13" stroke="#f0d040" stroke-width=".8"/></svg>
<div class="cb" style="left:1003px;top:25.3px;background:linear-gradient(#a9c6ea,#6f9ad2);border-color:#4a6a9a;"><svg width="15" height="15" viewBox="0 0 15 15"><path d="M3 8l3 3.5L12.5 2" stroke="#000" stroke-width="2" fill="none"/></svg></div>
<div class="fld " style="left:1021px;top:23.8px;width:246px"><span style="color:#666">—</span></div>
<div class="cb" style="left:1272px;top:25.3px;"></div>
<div class="lbl " style="left:1289px;top:24.8px;font-size:11px">Static</div>
<svg class="a" style="left:1325px;top:28px" width="10" height="6"><path d="M0 0h9.5L4.75 5.5z" fill="#333"/></svg>
<div class="lbl " style="left:995px;top:44.8px;font-size:11px">Tag</div>
<div class="pop " style="left:1021px;top:45px;width:141px">Untagged<svg class="a" style="right:4px;top:2.5px" width="5" height="8"><path d="M0 3.2L2.5 0 5 3.2zM0 4.8L2.5 8 5 4.8z" fill="#333"/></svg></div>
<div class="lbl " style="left:1168px;top:44.8px;font-size:11px">Layer</div>
<div class="pop " style="left:1207px;top:45px;width:128px">UI<svg class="a" style="right:4px;top:2.5px" width="5" height="8"><path d="M0 3.2L2.5 0 5 3.2zM0 4.8L2.5 8 5 4.8z" fill="#333"/></svg></div>
<div class="a" style="left:960px;top:64px;width:382px;height:1px;background:#8c8c8c"></div><div class="a" style="left:960px;top:65px;width:382px;height:1px;background:#d8d8d8"></div>
<div class="tri-d" style="left:964px;top:72px"></div>
<svg class="a" style="left:975px;top:67px" width="18" height="18" viewBox="0 0 18 18"><g fill="#ececec" stroke="#5a5a5a" stroke-width=".8" stroke-linejoin="round"><path d="M1 4L5.2 .8 7.8 7z"/><path d="M17 4L12.8 .8 10.2 7z"/><path d="M1 14L5.2 17.2 7.8 11z"/><path d="M17 14L12.8 17.2 10.2 11z"/></g></svg>
<div class="lbl b" style="left:1009px;top:68.0px;font-size:11.5px">Rect Transform</div>
<svg class="a" style="left:1307px;top:68px" width="34" height="14" viewBox="0 0 34 14"><path d="M1.5 1.5h9l2 1.5v9.5h-11z" fill="#3f66a0" stroke="#2a4470" stroke-width="1"/><path d="M3 2.6h7.8v8.8H3z" fill="#7f9fcc"/><path d="M3 2.6h2v8.8H3z" fill="#c9d8ec"/><text x="7.3" y="10" font-size="7.5" font-weight="bold" fill="#e8eef8" text-anchor="middle" font-family="'DejaVu Sans',sans-serif">?</text><g transform="translate(24.5 6)"><circle r="3.3" fill="none" stroke="#3c3c3c" stroke-width="2.2"/><g stroke="#3c3c3c" stroke-width="2"><path d="M0-5.6V5.6M-5.6 0H5.6M-4-4L4 4M-4 4L4-4"/></g><circle r="1.5" fill="#c8c8c8"/></g><path d="M29.5 9.5h4l-2 3z" fill="#3c3c3c"/></svg>
<div class="a" style="left:973px;top:87px;width:364px;height:15.5px;border:1px solid #8a8a8a;border-radius:3px;background:#d2d2d2;font-size:9px;letter-spacing:.47px;line-height:13px;padding-left:4px;white-space:nowrap">Some values in some or all objects are driven.</div>
<div class="lbl" style="left:980px;top:108.5px;width:40px;text-align:center;font-size:10px">left</div>
<div class="lbl" style="left:948px;top:140.5px;width:40px;text-align:center;font-size:10px;transform:rotate(-90deg)">top</div>
<svg class="a" style="left:975px;top:124px" width="49" height="49" viewBox="0 0 49 49"><rect x=".5" y=".5" width="48" height="48" fill="#d0d0d0" stroke="#7a7a7a"/><path d="M7.5 41V7.5H42" fill="none" stroke="#d83a2a" stroke-width="1"/><path d="M7.5 41H42V7.5" fill="none" stroke="#7a7a7a" stroke-width="1"/><rect x="16.5" y="16.5" width="16" height="16" fill="none" stroke="#333"/><rect x="6" y="6" width="3" height="3" fill="#b85a10"/></svg>
<div class="lbl gray" style="left:1106px;top:109.5px;">Pos X</div>
<div class="lbl gray" style="left:1184px;top:109.5px;">Pos Y</div>
<div class="lbl " style="left:1263px;top:109.5px;">Pos Z</div>
<div class="fld dis" style="left:1104px;top:125.2px;width:76px">—</div>
<div class="fld dis" style="left:1182px;top:125.2px;width:76px">—</div>
<div class="fld " style="left:1261px;top:125.2px;width:76px"><span style="color:#555">—</span></div>
<div class="lbl gray" style="left:1106px;top:141.5px;">Width</div>
<div class="lbl gray" style="left:1184px;top:141.5px;">Height</div>
<div class="fld dis" style="left:1104px;top:157.0px;width:76px">0.2</div>
<div class="fld dis" style="left:1182px;top:157.0px;width:76px">0.2</div>
<div class="btn" style="left:1285px;top:156px;width:52px;height:16.5px"></div><div class="a" style="left:1311px;top:157px;width:1px;height:15px;background:#6c6c6c"></div>
<svg class="a" style="left:1292px;top:159px" width="12" height="11"><rect x=".5" y=".5" width="10" height="9" fill="none" stroke="#222" stroke-dasharray="2.5 1.5"/></svg>
<div class="lbl" style="left:1319px;top:156px;font-size:10px">R</div>
<div class="tri-d" style="left:964px;top:179px"></div>
<div class="lbl " style="left:975px;top:175.7px;">Anchors</div>
<div class="lbl " style="left:990px;top:191.5px;">Min</div>
<div class="lbl gray" style="left:1106px;top:191.5px;">X</div>
<div class="fld dis" style="left:1117px;top:191.0px;width:63px">0</div>
<div class="lbl gray" style="left:1184px;top:191.5px;">Y</div>
<div class="fld dis" style="left:1195px;top:191.0px;width:63px">1</div>
<div class="lbl " style="left:990px;top:207.5px;">Max</div>
<div class="lbl gray" style="left:1106px;top:207.5px;">X</div>
<div class="fld dis" style="left:1117px;top:207.0px;width:63px">0</div>
<div class="lbl gray" style="left:1184px;top:207.5px;">Y</div>
<div class="fld dis" style="left:1195px;top:207.0px;width:63px">1</div>
<div class="lbl " style="left:975px;top:225.5px;">Pivot</div>
<div class="lbl " style="left:1106px;top:225.5px;">X</div>
<div class="fld " style="left:1117px;top:225.0px;width:63px">0.5</div>
<div class="lbl " style="left:1184px;top:225.5px;">Y</div>
<div class="fld " style="left:1195px;top:225.0px;width:63px">0.5</div>
<div class="lbl " style="left:975px;top:251.5px;">Rotation</div>
<div class="lbl " style="left:1106px;top:251.5px;">X</div>
<div class="fld " style="left:1117px;top:251.0px;width:63px">0</div>
<div class="lbl " style="left:1184px;top:251.5px;">Y</div>
<div class="fld " style="left:1195px;top:251.0px;width:63px">0</div>
<div class="lbl " style="left:1263px;top:251.5px;">Z</div>
<div class="fld " style="left:1274px;top:251.0px;width:63px">0</div>
<div class="lbl " style="left:975px;top:269.5px;">Scale</div>
<div class="lbl " style="left:1106px;top:269.5px;">X</div>
<div class="fld " style="left:1117px;top:269.0px;width:63px">1</div>
<div class="lbl " style="left:1184px;top:269.5px;">Y</div>
<div class="fld " style="left:1195px;top:269.0px;width:63px">1</div>
<div class="lbl " style="left:1263px;top:269.5px;">Z</div>
<div class="fld " style="left:1274px;top:269.0px;width:63px">1</div>
<div class="a" style="left:960px;top:289px;width:382px;height:1px;background:#8c8c8c"></div><div class="a" style="left:960px;top:290px;width:382px;height:1px;background:#d8d8d8"></div>
<svg class="a" style="left:975px;top:292px" width="16" height="16"><circle cx="8" cy="8" r="6.5" fill="none" stroke="#8a8a8a" stroke-width="1"/><circle cx="8" cy="8" r="3.8" fill="none" stroke="#8a8a8a" stroke-width="1"/><circle cx="8" cy="8" r="1.4" fill="#8a8a8a"/></svg>
<div class="lbl b" style="left:1009px;top:292.0px;font-size:11.5px">Canvas Renderer</div>
<svg class="a" style="left:1307px;top:292px" width="34" height="14" viewBox="0 0 34 14"><path d="M1.5 1.5h9l2 1.5v9.5h-11z" fill="#3f66a0" stroke="#2a4470" stroke-width="1"/><path d="M3 2.6h7.8v8.8H3z" fill="#7f9fcc"/><path d="M3 2.6h2v8.8H3z" fill="#c9d8ec"/><text x="7.3" y="10" font-size="7.5" font-weight="bold" fill="#e8eef8" text-anchor="middle" font-family="'DejaVu Sans',sans-serif">?</text><g transform="translate(24.5 6)"><circle r="3.3" fill="none" stroke="#3c3c3c" stroke-width="2.2"/><g stroke="#3c3c3c" stroke-width="2"><path d="M0-5.6V5.6M-5.6 0H5.6M-4-4L4 4M-4 4L4-4"/></g><circle r="1.5" fill="#c8c8c8"/></g><path d="M29.5 9.5h4l-2 3z" fill="#3c3c3c"/></svg>
<div class="a" style="left:960px;top:309px;width:382px;height:1px;background:#8c8c8c"></div><div class="a" style="left:960px;top:310px;width:382px;height:1px;background:#d8d8d8"></div>
<div class="tri-d" style="left:964px;top:315px"></div>
<svg class="a" style="left:976px;top:311px" width="15" height="15"><rect x=".5" y=".5" width="14" height="14" fill="#f2efe6" stroke="#e09020" stroke-width="1.4"/><rect x="2" y="2" width="5.5" height="5.5" fill="#444"/><rect x="7.5" y="7.5" width="5.5" height="5.5" fill="#444"/><circle cx="9" cy="6" r="2.5" fill="#e09020"/></svg>
<div class="cb" style="left:994.5px;top:312.0px;background:linear-gradient(#a9c6ea,#6f9ad2);border-color:#4a6a9a;"><svg width="15" height="15" viewBox="0 0 15 15"><path d="M3 8l3 3.5L12.5 2" stroke="#000" stroke-width="2" fill="none"/></svg></div>
<div class="lbl b" style="left:1009px;top:311.0px;font-size:11.5px;letter-spacing:.15px">Image (Script)</div>
<svg class="a" style="left:1307px;top:311px" width="34" height="14" viewBox="0 0 34 14"><path d="M1.5 1.5h9l2 1.5v9.5h-11z" fill="#3f66a0" stroke="#2a4470" stroke-width="1"/><path d="M3 2.6h7.8v8.8H3z" fill="#7f9fcc"/><path d="M3 2.6h2v8.8H3z" fill="#c9d8ec"/><text x="7.3" y="10" font-size="7.5" font-weight="bold" fill="#e8eef8" text-anchor="middle" font-family="'DejaVu Sans',sans-serif">?</text><g transform="translate(24.5 6)"><circle r="3.3" fill="none" stroke="#3c3c3c" stroke-width="2.2"/><g stroke="#3c3c3c" stroke-width="2"><path d="M0-5.6V5.6M-5.6 0H5.6M-4-4L4 4M-4 4L4-4"/></g><circle r="1.5" fill="#c8c8c8"/></g><path d="M29.5 9.5h4l-2 3z" fill="#3c3c3c"/></svg>
<div class="lbl " style="left:975px;top:327.8px;">Source Image</div>
<div class="fld " style="left:1105px;top:327.3px;width:214px">None (Sprite)</div>
<svg class="a" style="left:1325px;top:330px" width="10" height="10"><circle cx="5" cy="5" r="3.6" fill="none" stroke="#333" stroke-width="1"/><circle cx="5" cy="5" r="1.1" fill="#333"/></svg>
<div class="lbl " style="left:975px;top:345.6px;">Color</div>
<div class="fld" style="left:1105px;top:345px;width:214px;background:#fff;border-color:#555"></div>
<svg class="a" style="left:1322px;top:344px" width="17" height="18" viewBox="0 0 17 18"><path d="M1.8 16.2l.8-2.6L9.8 6.4l1.8 1.8L4.4 15.4z" fill="#ededed" stroke="#444" stroke-width=".9"/><path d="M9 5.2l3.8 3.8" stroke="#333" stroke-width="1.3"/><path d="M10.6 6.4l2.6-3.2a1.5 1.5 0 0 1 2.2 2.2l-3.2 2.6z" fill="#444" stroke="#444" stroke-width=".8"/></svg>
<div class="lbl " style="left:975px;top:363.5px;">Material</div>
<div class="fld " style="left:1105px;top:363.0px;width:214px">None (Material)</div>
<svg class="a" style="left:1325px;top:366px" width="10" height="10"><circle cx="5" cy="5" r="3.6" fill="none" stroke="#333" stroke-width="1"/><circle cx="5" cy="5" r="1.1" fill="#333"/></svg>
<div class="lbl " style="left:975px;top:381.5px;">Raycast Target</div>
<div class="cb" style="left:1106px;top:382.5px;background:linear-gradient(#a9c6ea,#6f9ad2);border-color:#4a6a9a;"><svg width="15" height="15" viewBox="0 0 15 15"><path d="M3 8l3 3.5L12.5 2" stroke="#000" stroke-width="2" fill="none"/></svg></div>
<div class="a" style="left:960px;top:401px;width:382px;height:1px;background:#8c8c8c"></div><div class="a" style="left:960px;top:402px;width:382px;height:1px;background:#d8d8d8"></div>
<div class="tri-d" style="left:964px;top:407.5px"></div>
<svg class="a" style="left:975px;top:403px" width="17" height="17"><circle cx="8.5" cy="8.5" r="7.3" fill="#f4f0e4" stroke="#e09a20" stroke-width="1.5"/><text x="8.5" y="11" font-size="6.5" font-weight="bold" fill="#777" text-anchor="middle" font-family="'DejaVu Sans',sans-serif">OK</text></svg>
<div class="cb" style="left:994.5px;top:404.5px;background:linear-gradient(#a9c6ea,#6f9ad2);border-color:#4a6a9a;"><svg width="15" height="15" viewBox="0 0 15 15"><path d="M3 8l3 3.5L12.5 2" stroke="#000" stroke-width="2" fill="none"/></svg></div>
<div class="lbl b" style="left:1009px;top:403.5px;font-size:11.5px;letter-spacing:-.15px">Button (Script)</div>
<svg class="a" style="left:1307px;top:403.5px" width="34" height="14" viewBox="0 0 34 14"><path d="M1.5 1.5h9l2 1.5v9.5h-11z" fill="#3f66a0" stroke="#2a4470" stroke-width="1"/><path d="M3 2.6h7.8v8.8H3z" fill="#7f9fcc"/><path d="M3 2.6h2v8.8H3z" fill="#c9d8ec"/><text x="7.3" y="10" font-size="7.5" font-weight="bold" fill="#e8eef8" text-anchor="middle" font-family="'DejaVu Sans',sans-serif">?</text><g transform="translate(24.5 6)"><circle r="3.3" fill="none" stroke="#3c3c3c" stroke-width="2.2"/><g stroke="#3c3c3c" stroke-width="2"><path d="M0-5.6V5.6M-5.6 0H5.6M-4-4L4 4M-4 4L4-4"/></g><circle r="1.5" fill="#c8c8c8"/></g><path d="M29.5 9.5h4l-2 3z" fill="#3c3c3c"/></svg>
<div class="lbl " style="left:975px;top:420.7px;">Interactable</div>
<div class="cb" style="left:1106px;top:421.7px;background:linear-gradient(#a9c6ea,#6f9ad2);border-color:#4a6a9a;"><svg width="15" height="15" viewBox="0 0 15 15"><path d="M3 8l3 3.5L12.5 2" stroke="#000" stroke-width="2" fill="none"/></svg></div>
<div class="lbl " style="left:975px;top:438.5px;">Transition</div>
<div class="pop " style="left:1105px;top:439px;width:232px">Color Tint<svg class="a" style="right:4px;top:2.5px" width="5" height="8"><path d="M0 3.2L2.5 0 5 3.2zM0 4.8L2.5 8 5 4.8z" fill="#333"/></svg></div>
<div class="lbl " style="left:990px;top:456.7px;">Target Graphic</div>
<div class="fld dis" style="left:1105px;top:456.2px;width:214px">—</div>
<svg class="a" style="left:1325px;top:459px" width="10" height="10"><circle cx="5" cy="5" r="3.6" fill="none" stroke="#333" stroke-width="1"/><circle cx="5" cy="5" r="1.1" fill="#333"/></svg>
<div class="lbl " style="left:990px;top:474.5px;">Normal Color</div>
<div class="fld" style="left:1105px;top:474.0px;width:214px;background:#fff;border-color:#555;padding:0">
</div>
<svg class="a" style="left:1322px;top:473px" width="17" height="18" viewBox="0 0 17 18"><path d="M1.8 16.2l.8-2.6L9.8 6.4l1.8 1.8L4.4 15.4z" fill="#ededed" stroke="#444" stroke-width=".9"/><path d="M9 5.2l3.8 3.8" stroke="#333" stroke-width="1.3"/><path d="M10.6 6.4l2.6-3.2a1.5 1.5 0 0 1 2.2 2.2l-3.2 2.6z" fill="#444" stroke="#444" stroke-width=".8"/></svg>
<div class="lbl " style="left:990px;top:492.7px;">Highlighted Color</div>
<div class="fld" style="left:1105px;top:492.2px;width:214px;background:#f5f5f5;border-color:#555;padding:0">
</div>
<svg class="a" style="left:1322px;top:491.2px" width="17" height="18" viewBox="0 0 17 18"><path d="M1.8 16.2l.8-2.6L9.8 6.4l1.8 1.8L4.4 15.4z" fill="#ededed" stroke="#444" stroke-width=".9"/><path d="M9 5.2l3.8 3.8" stroke="#333" stroke-width="1.3"/><path d="M10.6 6.4l2.6-3.2a1.5 1.5 0 0 1 2.2 2.2l-3.2 2.6z" fill="#444" stroke="#444" stroke-width=".8"/></svg>
<div class="lbl " style="left:990px;top:510.5px;">Pressed Color</div>
<div class="fld" style="left:1105px;top:510.0px;width:214px;background:#c8c8c8;border-color:#555;padding:0">
<div class="a" style="left:0;bottom:0;width:100%;height:2px;background:#fff"></div>
</div>
<svg class="a" style="left:1322px;top:509px" width="17" height="18" viewBox="0 0 17 18"><path d="M1.8 16.2l.8-2.6L9.8 6.4l1.8 1.8L4.4 15.4z" fill="#ededed" stroke="#444" stroke-width=".9"/><path d="M9 5.2l3.8 3.8" stroke="#333" stroke-width="1.3"/><path d="M10.6 6.4l2.6-3.2a1.5 1.5 0 0 1 2.2 2.2l-3.2 2.6z" fill="#444" stroke="#444" stroke-width=".8"/></svg>
<div class="lbl " style="left:990px;top:528.9px;">Disabled Color</div>
<div class="fld" style="left:1105px;top:528.0px;width:214px;background:#c8c8c8;border-color:#555;padding:0">
<div class="a" style="left:0;bottom:0;width:50%;height:2px;background:#fff"></div><div class="a" style="left:50%;bottom:0;width:50%;height:2px;background:#000"></div>
</div>
<svg class="a" style="left:1322px;top:527px" width="17" height="18" viewBox="0 0 17 18"><path d="M1.8 16.2l.8-2.6L9.8 6.4l1.8 1.8L4.4 15.4z" fill="#ededed" stroke="#444" stroke-width=".9"/><path d="M9 5.2l3.8 3.8" stroke="#333" stroke-width="1.3"/><path d="M10.6 6.4l2.6-3.2a1.5 1.5 0 0 1 2.2 2.2l-3.2 2.6z" fill="#444" stroke="#444" stroke-width=".8"/></svg>
<div class="lbl " style="left:990px;top:546.5px;">Color Multiplier</div>
<div class="a" style="left:1108px;top:552px;width:174px;height:3px;background:#9a9a9a;border-top:1px solid #6a6a6a;border-radius:2px"></div>
<div class="a" style="left:1104px;top:549px;width:10px;height:10px;border-radius:5px;background:linear-gradient(#f8f8f8,#d0d0d0);border:1px solid #666"></div>
<div class="fld " style="left:1287px;top:546.0px;width:50px">1</div>
<div class="lbl " style="left:990px;top:564.5px;">Fade Duration</div>
<div class="fld " style="left:1105px;top:564.0px;width:232px">0.1</div>
<div class="lbl " style="left:975px;top:590.5px;">Navigation</div>
<div class="pop " style="left:1105px;top:591px;width:232px">Automatic<svg class="a" style="right:4px;top:2.5px" width="5" height="8"><path d="M0 3.2L2.5 0 5 3.2zM0 4.8L2.5 8 5 4.8z" fill="#333"/></svg></div>
<div class="btn" style="left:1105px;top:611px;width:232px;height:15px;font-size:9px;letter-spacing:.45px;line-height:13px">Visualize</div>
<div class="a" style="left:974px;top:637px;width:362px;height:64.5px;border:1px solid #8d8d8d;border-radius:3px;background:#d4d4d4"></div>
<div class="a" style="left:975px;top:638px;width:360px;height:15.5px;background:linear-gradient(#e0e0e0,#cfcfcf);border-bottom:1px solid #9a9a9a;border-radius:2px 2px 0 0"></div>
<div class="lbl" style="left:981px;top:637.5px;font-size:11px;letter-spacing:.35px">On Click ()</div>
<div class="lbl" style="left:981px;top:656.5px;font-size:11px;letter-spacing:.1px">List is Empty</div>
<div class="a" style="left:1280px;top:701px;width:56px;height:15.5px;border:1px solid #8d8d8d;border-top:none;border-radius:0 0 3px 3px;background:#d0d0d0"></div>
<div class="lbl b" style="left:1291px;top:700.5px;font-size:12px">+</div><div class="lbl" style="left:1316px;top:700.5px;font-size:12px;color:#8a8a8a">−</div>
<div class="a" style="left:960px;top:725px;width:382px;height:45px;background:#d8d8d8;border-top:1px solid #8c8c8c;border-bottom:1px solid #8c8c8c"></div>
<div class="a" style="left:960px;top:773px;width:382px;height:1px;background:#8c8c8c"></div>
<div class="a" style="left:975px;top:731px;width:32px;height:32px;background:#fff"></div>
<div class="lbl" style="left:1015px;top:730px;font-size:12.3px">Default UI Material</div>
<div class="lbl gray" style="left:1015px;top:750px;font-size:11.5px">Shader</div>
<div class="pop" style="left:1063px;top:750.5px;width:272px;height:14px;color:#666;background:linear-gradient(#e6e6e6,#d2d2d2);border-color:#999;line-height:12px">UI/Default<svg class="a" style="right:5px;top:4px" width="6" height="4"><path d="M0 0h5l-2.5 3.2z" fill="#777"/></svg></div>
<svg class="a" style="left:965px;top:757px" width="8" height="9"><path d="M0 0l7.5 4.2L0 8.5z" fill="#777"/></svg>
<svg class="a" style="left:1307px;top:731px" width="34" height="14" viewBox="0 0 34 14"><path d="M1.5 1.5h9l2 1.5v9.5h-11z" fill="#3f66a0" stroke="#2a4470" stroke-width="1"/><path d="M3 2.6h7.8v8.8H3z" fill="#7f9fcc"/><path d="M3 2.6h2v8.8H3z" fill="#c9d8ec"/><text x="7.3" y="10" font-size="7.5" font-weight="bold" fill="#e8eef8" text-anchor="middle" font-family="'DejaVu Sans',sans-serif">?</text><g transform="translate(24.5 6)"><circle r="3.3" fill="none" stroke="#3c3c3c" stroke-width="2.2"/><g stroke="#3c3c3c" stroke-width="2"><path d="M0-5.6V5.6M-5.6 0H5.6M-4-4L4 4M-4 4L4-4"/></g><circle r="1.5" fill="#d8d8d8"/></g><path d="M29.5 9.5h4l-2 3z" fill="#3c3c3c"/></svg>
<div class="btn" style="left:1033px;top:785px;width:230px;height:23px;font-size:12.3px;line-height:20px;border-color:#555">Add Component</div>
</div></body></html>
